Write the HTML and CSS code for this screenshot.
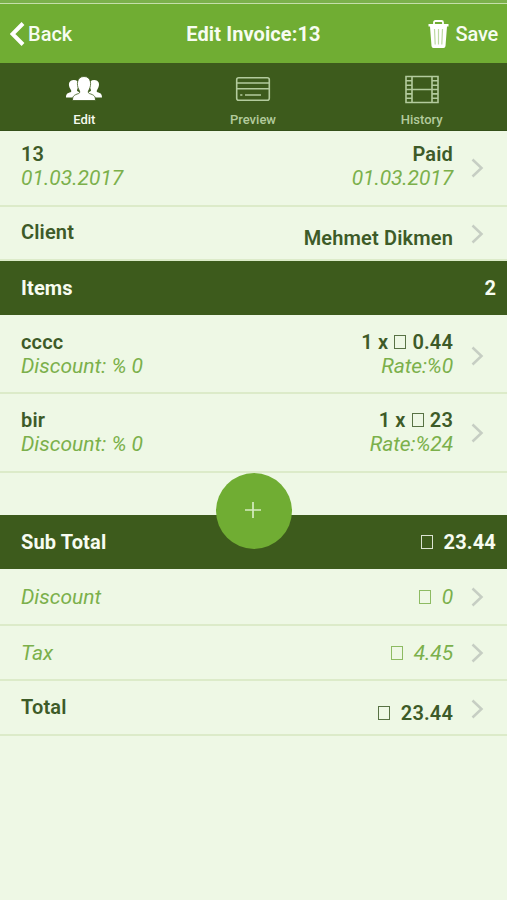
FILE: index.html
```html
<!DOCTYPE html>
<html lang="en">
<head>
<meta charset="utf-8">
<title>Edit Invoice</title>
<link rel="stylesheet" href="styles.css">
</head>
<body>
<div class="status"></div>
<header class="bar">
  <div class="back"><svg width="15" height="24" viewBox="0 0 15 24"><path d="M13 1.500 2.500 12 13 22.500" fill="none" stroke="#fff" stroke-width="4"/></svg><span>Back</span></div>
  <h1>Edit Invoice:13</h1>
  <div class="actions">
    <svg width="21" height="28" viewBox="0 0 21 28"><path d="M6 4V2.500Q6 1 7.500 1h6Q15 1 15 2.500V4" fill="none" stroke="#fff" stroke-width="1.800"/><path d="M.5 4h20v2.500H.5zM2 6.500h17L17.500 26q-.2 2-2 2h-10q-1.800 0-2-2z" fill="#fff"/><path d="m6.500 9 .7 15.500M10.500 9v15.500M14.500 9l-.7 15.500" stroke="#bcd9a2" stroke-width="1.200"/></svg>
    <span>Save</span>
  </div>
</header>
<nav class="tabs">
  <div class="tab active">
    <svg width="38" height="30" viewBox="0 0 38 30"><g fill="#fff"><path d="M1 23.500c0-3.800 1.500-4.300 4.500-5.300 1.200-.4.900-1.800 0-3C2.500 10.500 4 6 8.800 6c3.400 0 5 2 4.800 5-.1 3-1.700 4-1.600 5.500.1 1 4 2 4.800 3L14 23.500z"/><path d="M37 23.500c0-3.800-1.500-4.300-4.500-5.300-1.200-.4-.9-1.800 0-3C35.500 10.500 34 6 29.200 6c-3.400 0-5 2-4.800 5 .1 3 1.700 4 1.600 5.500-.1 1-4 2-4.800 3L24 23.500z"/><path d="M7.500 26.500c0-4.500 1.500-5.500 6.200-7 1.500-.6 1.200-2.200.3-3.600C11 10.500 12 2.500 19 2.500S27 10.500 24 15.900c-.9 1.300-1.200 3 .3 3.600 4.700 1.500 6.200 2.500 6.200 7z" stroke="#3d5b1c" stroke-width=".8"/></g></svg>
    <span>Edit</span>
  </div>
  <div class="tab">
    <svg width="38" height="30" viewBox="0 0 38 30"><g fill="none" stroke="#b3cb9d" stroke-width="1.600"><rect x="2.700" y="3.700" width="32.600" height="22.600" rx="2"/><path d="M2.500 9h33M2.500 14.800h33M6.200 21h2.200M11 21h16"/></g></svg>
    <span>Preview</span>
  </div>
  <div class="tab">
    <svg width="38" height="30" viewBox="0 0 38 30"><g fill="none" stroke="#b3cb9d" stroke-width="1.600"><path d="M3 2.500h32v26H3zM9 2v27M29 2v27M9 15.500h20M3 6.800h6M3 11.200h6M3 15.500h6M3 19.900h6M3 24.300h6M29 6.800h6M29 11.200h6M29 15.500h6M29 19.900h6M29 24.300h6"/></g></svg>
    <span>History</span>
  </div>
</nav>
<main>
  <section class="row summary">
    <div class="left"><b>13</b><i>01.03.2017</i></div>
    <div class="right"><b>Paid</b><i>01.03.2017</i></div>
    <svg class="chev" width="14" height="22" viewBox="0 0 14 22"><path d="m1.500 2.500 9 8.500-9 8.500"/></svg>
  </section>
  <section class="row client">
    <div class="left"><b>Client</b></div>
    <div class="right low"><b>Mehmet Dikmen</b></div>
    <svg class="chev" width="14" height="22" viewBox="0 0 14 22"><path d="m1.500 2.500 9 8.500-9 8.500"/></svg>
  </section>
  <section class="band"><b>Items</b><b>2</b></section>
  <section class="row item">
    <div class="left"><b>cccc</b><i>Discount: % 0</i></div>
    <div class="right"><b>1 x <span class="cur inner"></span> 0.44</b><i>Rate:%0</i></div>
    <svg class="chev" width="14" height="22" viewBox="0 0 14 22"><path d="m1.500 2.500 9 8.500-9 8.500"/></svg>
  </section>
  <section class="row item second">
    <div class="left"><b>bir</b><i>Discount: % 0</i></div>
    <div class="right"><b>1 x <span class="cur inner"></span> 23</b><i>Rate:%24</i></div>
    <svg class="chev" width="14" height="22" viewBox="0 0 14 22"><path d="m1.500 2.500 9 8.500-9 8.500"/></svg>
  </section>
  <div class="adder"><button class="add" aria-label="Add item"><svg width="16" height="16" viewBox="0 0 16 16"><path d="M8 0v16M0 8h16" stroke="#d5ecc0" stroke-width="1.700"/></svg></button></div>
  <section class="band"><b>Sub Total</b><b><span class="cur wide"></span>23.44</b></section>
  <section class="row discount">
    <div class="left"><i>Discount</i></div>
    <div class="right"><i><span class="cur wide"></span>0</i></div>
    <svg class="chev" width="14" height="22" viewBox="0 0 14 22"><path d="m1.500 2.500 9 8.500-9 8.500"/></svg>
  </section>
  <section class="row tax">
    <div class="left"><i>Tax</i></div>
    <div class="right"><i><span class="cur wide"></span>4.45</i></div>
    <svg class="chev" width="14" height="22" viewBox="0 0 14 22"><path d="m1.500 2.500 9 8.500-9 8.500"/></svg>
  </section>
  <section class="row client total">
    <div class="left"><b>Total</b></div>
    <div class="right low"><b><span class="cur wide"></span>23.44</b></div>
    <svg class="chev" width="14" height="22" viewBox="0 0 14 22"><path d="m1.500 2.500 9 8.500-9 8.500"/></svg>
  </section>
</main>
</body>
</html>
```
FILE: styles.css
```css
* { box-sizing: border-box; }
body {
  margin: 0;
  min-height: 900px;
  background: #eef8e5;
  color: #3d5b28;
  font: 20px/24px Roboto, "Liberation Sans", sans-serif;
}
svg { display: block; flex: none; }
.status { height: 4px; background: #7bb04b; border-bottom: 1px solid #c5dfaa; }
.bar {
  height: 59px;
  display: grid;
  grid-template-columns: 1fr auto 1fr;
  align-items: center;
  padding: 0 9px 0 10px;
  background: #70ad33;
  color: #f7fcf1;
}
.back, .actions { display: flex; align-items: center; font-weight: 500; }
.back { gap: 3px; }
.actions { justify-content: flex-end; gap: 7px; letter-spacing: -0.2px; }
h1 { margin: 0 1px 0 0; font-size: 20px; line-height: 24px; font-weight: 700; letter-spacing: 0.1px; }
.tabs {
  height: 68px;
  display: grid;
  grid-template-columns: repeat(3, 1fr);
  padding-right: 1px;
  background: #3d5b1c;
  border-bottom: 1px solid #34501a;
}
.tab {
  display: flex;
  flex-direction: column;
  align-items: center;
  padding-top: 11px;
  color: #b3cb9d;
  font-size: 13px;
  line-height: 16px;
  font-weight: 500;
}
.tab span { margin-top: 8px; }
.active { color: #f4faef; }
.row {
  display: flex;
  padding: 0 22px 0 21px;
  border-bottom: 2px solid #dcebc9;
}
.left { flex: 1; }
.right { text-align: right; margin-right: 18px; }
.row b, .row i { display: block; }
.row b, .band b { letter-spacing: 0.15px; }
.row b { font-weight: 600; }
.row i { color: #7bb04b; font-size: 21px; }
.right i { letter-spacing: -0.1px; }
.chev { align-self: center; fill: none; stroke: #c6cec3; stroke-width: 2.500; }
.summary { height: 76px; padding-top: 11px; }
.summary .chev, .item .chev { margin-top: -11px; }
.item.second .chev { margin-top: -13px; }
.client { height: 54px; padding-top: 13px; }
.client .chev { margin-top: -12px; }
.low { padding-top: 6px; }
.item { height: 79px; padding-top: 15px; }
.item.second { padding-top: 14px; }
.band {
  height: 54px;
  display: flex;
  align-items: center;
  justify-content: space-between;
  padding: 0 11px 0 21px;
  background: #3d5b1c;
  color: #f7fcf1;
}
.adder { height: 42px; position: relative; }
.add {
  position: absolute;
  left: 215.500px;
  top: 0;
  width: 76px;
  height: 76px;
  padding: 0 1px 2px 0;
  display: flex;
  align-items: center;
  justify-content: center;
  border: 0;
  border-radius: 50%;
  background: #70ad33;
}
.discount { height: 57px; padding-top: 16px; }
.discount .chev { margin-top: -15px; }
.tax { height: 55px; padding-top: 15px; }
.tax .chev { margin-top: -14px; }
.total { height: 55px; padding-top: 14px; }
.cur {
  display: inline-block;
  width: 12px;
  height: 14px;
  border: 1px solid currentColor;
  opacity: .85;
}
.inner { margin: 0 1px; }
.wide { margin-right: 11px; }
```
